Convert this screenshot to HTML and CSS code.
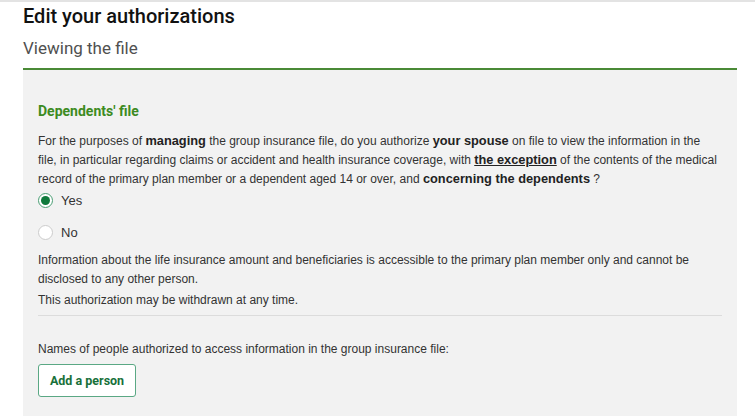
FILE: index.html
```html
<!DOCTYPE html>
<html lang="en">
<head>
<meta charset="utf-8">
<title>Edit your authorizations</title>
<link rel="stylesheet" href="styles.css">
</head>
<body>
<div class="page">
  <h1 class="title">Edit your authorizations</h1>
  <h2 class="subtitle">Viewing the file</h2>
  <section class="panel">
    <h3 class="panel-title">Dependents' file</h3>
    <p class="text">For the purposes of <b>managing</b> the group insurance file, do you authorize <b>your spouse</b> on file to view the information in the file, in particular regarding claims or accident and health insurance coverage, with <b class="u">the exception</b> of the contents of the medical record of the primary plan member or a dependent aged 14 or over, and <b>concerning the dependents</b> ?</p>
    <div class="radios">
      <label class="radio"><span class="dot checked"></span><span>Yes</span></label>
      <label class="radio"><span class="dot"></span><span>No</span></label>
    </div>
    <p class="text info">Information about the life insurance amount and beneficiaries is accessible to the primary plan member only and cannot be disclosed to any other person.</p>
    <p class="text withdraw">This authorization may be withdrawn at any time.</p>
    <hr class="sep">
    <p class="text names">Names of people authorized to access information in the group insurance file:</p>
    <button class="btn" type="button">Add a person</button>
  </section>
</div>
</body>
</html>
```
FILE: styles.css
```css
html, body {
  margin: 0;
  padding: 0;
  background: #ffffff;
}
body {
  border-top: 2px solid #e3e3e3;
  font-family: "Liberation Sans", Arial, sans-serif;
  color: #333333;
}
.page {
  width: 714px;
  margin-left: 23px;
}
.title {
  margin: 0;
  padding-top: 2px;
  font-family: Roboto, "Liberation Sans", sans-serif;
  font-weight: 500;
  font-size: 20px;
  line-height: 24px;
  color: #111111;
}
.subtitle {
  margin: 10px 0 0;
  padding-bottom: 10px;
  font-family: Roboto, "Liberation Sans", sans-serif;
  font-weight: 400;
  font-size: 17px;
  line-height: 20px;
  color: #505050;
  border-bottom: 2px solid #4a8a36;
}
.panel {
  background: #f2f2f2;
  padding: 31px 15px 19px;
}
.panel-title {
  margin: 0;
  font-family: Roboto, "Liberation Sans", sans-serif;
  font-weight: 700;
  font-size: 14px;
  line-height: 20px;
  color: #3d8b22;
}
.text {
  margin: 0;
  font-size: 12px;
  line-height: 19px;
}
.panel-title + .text {
  margin-top: 11px;
}
.text b {
  font-weight: 700;
  font-size: 12.8px;
  line-height: 1;
  color: #222222;
}
.text b.u {
  text-decoration: underline;
}
.radios {
  display: flex;
  flex-direction: column;
  gap: 10px;
}
.radio {
  display: flex;
  align-items: center;
  gap: 8px;
  height: 22px;
  font-size: 13px;
  color: #333333;
}
.dot {
  box-sizing: border-box;
  width: 15px;
  height: 15px;
  border-radius: 50%;
  background: #ffffff;
  border: 1px solid #cccccc;
  display: flex;
  align-items: center;
  justify-content: center;
}
.dot.checked {
  border: 1px solid #4a9e74;
}
.dot.checked::after {
  content: "";
  width: 9px;
  height: 9px;
  border-radius: 50%;
  background: #0f7a3c;
}
.info {
  margin-top: 8px;
}
.withdraw {
  margin-top: 2px;
}
.sep {
  margin: 5px 0 0;
  border: 0;
  border-top: 1px solid #dcdcdc;
  height: 0;
}
.names {
  margin-top: 24px;
}
.btn {
  margin-top: 5px;
  box-sizing: border-box;
  width: 98px;
  height: 33px;
  background: #ffffff;
  border: 1px solid #5aa884;
  border-radius: 3px;
  font-family: Roboto, "Liberation Sans", sans-serif;
  font-weight: 700;
  font-size: 12.5px;
  color: #17703a;
  padding: 0;
  cursor: pointer;
}
```
